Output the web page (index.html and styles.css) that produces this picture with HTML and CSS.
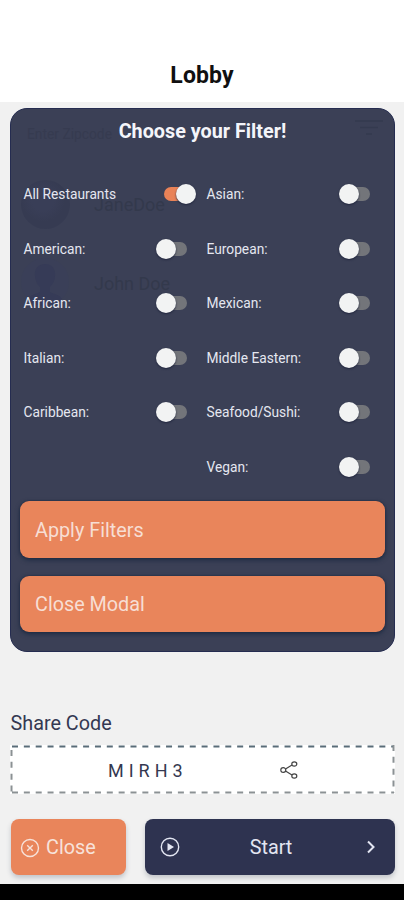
FILE: index.html
```html
<!DOCTYPE html>
<html lang="en">
<head>
<meta charset="utf-8">
<title>Lobby</title>
<link rel="stylesheet" href="styles.css">
</head>
<body>
<div class="screen">
  <header class="header"><h1>Lobby</h1></header>
  <main class="content">
    <section class="modal">
      <div class="behind" aria-hidden="true">
        <span class="behind-input">Enter Zipcode</span>
        <svg class="behind-filter" viewBox="0 0 28 18"><path d="M0 2H28M5 8.500H23M11 15H17"/></svg>
        <span class="avatar avatar-one"></span>
        <span class="behind-name name-one">JaneDoe</span>
        <svg class="avatar-two" viewBox="0 0 48 48"><circle class="disc" cx="24" cy="24" r="24"/><path class="person" d="M24 6C17 6 13 11 14 18C14 23 17 27 19 29V34C15 36 9 37 7 41C12 46 17 48 24 48S36 46 41 41C39 37 33 36 29 34V29C32 26 34 22 34 18C35 11 31 6 24 6Z"/></svg>
        <span class="behind-name name-two">John Doe</span>
      </div>
      <h2>Choose your Filter!</h2>
      <div class="filters">
        <div class="column">
          <label class="row"><span>All Restaurants</span><i class="switch on"></i></label>
          <label class="row"><span>American:</span><i class="switch"></i></label>
          <label class="row"><span>African:</span><i class="switch"></i></label>
          <label class="row"><span>Italian:</span><i class="switch"></i></label>
          <label class="row"><span>Caribbean:</span><i class="switch"></i></label>
        </div>
        <div class="column">
          <label class="row"><span>Asian:</span><i class="switch"></i></label>
          <label class="row"><span>European:</span><i class="switch"></i></label>
          <label class="row"><span>Mexican:</span><i class="switch"></i></label>
          <label class="row"><span>Middle Eastern:</span><i class="switch"></i></label>
          <label class="row"><span>Seafood/Sushi:</span><i class="switch"></i></label>
          <label class="row"><span>Vegan:</span><i class="switch"></i></label>
        </div>
      </div>
      <div class="actions">
        <button class="action">Apply Filters</button>
        <button class="action">Close Modal</button>
      </div>
    </section>
    <h3>Share Code</h3>
    <div class="code">
      <svg class="dashes" viewBox="0 0 385 49"><path class="top" d="M2 1.500H384"/><path d="M2 47.500H384M1.500 5V48M383.500 0V48"/></svg>
      <span class="code-text">MIRH3</span>
      <svg class="share" viewBox="0 0 18 18"><path d="M5.500 8L12 4M5.500 10L12 14"/><ellipse cx="3.300" cy="9" rx="2.500" ry="2.300"/><ellipse cx="14.300" cy="3" rx="2.500" ry="2.200"/><ellipse cx="14.300" cy="15" rx="2.500" ry="2.200"/></svg>
    </div>
    <div class="footer">
      <button class="close"><svg viewBox="0 0 20 20"><circle cx="10" cy="10" r="8.500"/><path d="M7.200 7.200L12.800 12.800M12.800 7.200L7.200 12.800"/></svg><span>Close</span></button>
      <button class="start"><svg class="play" viewBox="0 0 20 20"><circle cx="10" cy="10" r="8.700"/><path d="M7.500 6L14 10L7.500 14Z"/></svg><span>Start</span><svg class="chevron" viewBox="0 0 10 14"><path d="M2 1.500L7.500 7L2 12.500"/></svg></button>
    </div>
  </main>
  <div class="navbar"></div>
</div>
</body>
</html>
```

FILE: styles.css
```css
* { box-sizing: border-box; }
body { margin: 0; font-family: Roboto, "Liberation Sans", sans-serif; }
h1, h2, h3 { margin: 0; }
button { border: 0; font: inherit; text-align: left; }
.screen { width: 404px; height: 900px; display: flex; flex-direction: column; overflow: hidden; background: #f1f1f1; }
.header { height: 102px; padding-top: 62px; background: #fff; text-align: center; }
.header h1 { font-size: 23px; line-height: 28px; font-weight: 700; letter-spacing: .1px; color: #101010; }
.content { flex: 1; padding: 6px 9.500px 0 10.500px; }
.navbar { height: 16px; background: #000; }

.modal { position: relative; height: 544px; margin-left: -.5px; border-radius: 17px; background: #3b4056; border: 1px solid #252c50; overflow: hidden; padding: 0 8.500px 0 9px; display: flex; flex-direction: column; }
.modal h2 { position: relative; margin-top: 9px; font-size: 19.8px; line-height: 28px; font-weight: 700; text-align: center; color: #f4f5fa; }
.filters { position: relative; display: flex; justify-content: space-between; margin-top: 21px; padding: 0 14px 0 3.500px; height: 327px; }
.column { width: 164.500px; }
.row { height: 54.500px; display: flex; align-items: center; justify-content: space-between; font-size: 13.75px; color: #e5e7f0; }
.switch { position: relative; width: 31px; height: 20px; display: flex; align-items: center; }
.switch::before { content: ""; width: 30px; height: 14px; border-radius: 7px; background: #73757a; }
.switch::after { content: ""; position: absolute; left: -1px; top: 0; width: 20px; height: 20px; border-radius: 50%; background: #f2f3f3; box-shadow: 0 1px 2px #20253d; }
.switch.on { left: 7px; }
.switch.on::before { background: #e98257; }
.switch.on::after { left: 12px; }
.actions { position: relative; display: flex; flex-direction: column; gap: 18px; margin-top: 7px; }
.action { height: 56.500px; border-radius: 9px; padding: 2px 15px 0; background: #e9855b; color: #f7ded4; font-size: 19.8px; box-shadow: 0 2px 5px #1d2a42, 0 0 2px #1d2a42; }

.behind-input, .behind-filter, .behind-name, .avatar, .avatar-two { position: absolute; }
.behind-input { left: 16px; top: 17px; font-size: 13.8px; color: #363b50; }
.behind-filter { left: 344px; top: 10px; width: 28px; height: 18px; stroke: #343a4f; stroke-width: 1.5; }
.avatar { left: 10px; top: 71px; width: 49px; height: 49px; border-radius: 50%; background: radial-gradient(circle at 45% 40%, #393e57 0 28%, #363b52 55%); }
.avatar-two { left: 10px; top: 149px; width: 48px; height: 48px; }
.disc { fill: #3a3f58; }
.person { fill: #363b57; }
.behind-name { left: 83px; font-size: 18px; line-height: 24px; color: #33394c; }
.name-one { top: 84px; }
.name-two { top: 163px; }

.content h3 { margin-top: 57px; font-size: 19.8px; line-height: 30px; font-weight: 400; color: #343852; }
.code { position: relative; height: 49px; margin-top: 6px; margin-left: -.5px; margin-right: -.5px; background: #fff; display: flex; align-items: center; padding-left: 98px; }
.dashes { position: absolute; left: 0; top: 0; width: 385px; height: 49px; fill: none; stroke: #8b9194; stroke-width: 2; stroke-dasharray: 6 5.85; }
.dashes .top { stroke: #596c78; }
.code-text { width: 172px; padding-top: 2px; font-size: 18px; letter-spacing: 5px; color: #343850; }
.share { width: 18px; height: 18px; fill: none; stroke: #444; stroke-width: 1.2; }
.footer { display: flex; gap: 19px; margin-top: 25px; }
.footer button { height: 55.500px; border-radius: 8px; display: flex; align-items: center; box-shadow: 0 3px 5px #c2c5ca; font-size: 19.8px; }
.footer svg { fill: none; stroke: currentColor; stroke-width: 1.4; }
.footer .close { width: 115.500px; padding: 2px 10px 0 9.500px; gap: 6px; background: #e9855b; color: #f7e2da; }
.close svg { width: 20px; height: 20px; }
.footer .start { flex: 1; padding: 1px 18px 0 14.500px; justify-content: space-between; background: #2e3350; color: #e3e6f2; }
.start span { margin-right: 4px; }
.play { width: 20px; height: 20px; }
.play path { fill: currentColor; stroke: none; }
.footer .chevron { width: 10px; height: 14px; stroke-width: 2; }
```
